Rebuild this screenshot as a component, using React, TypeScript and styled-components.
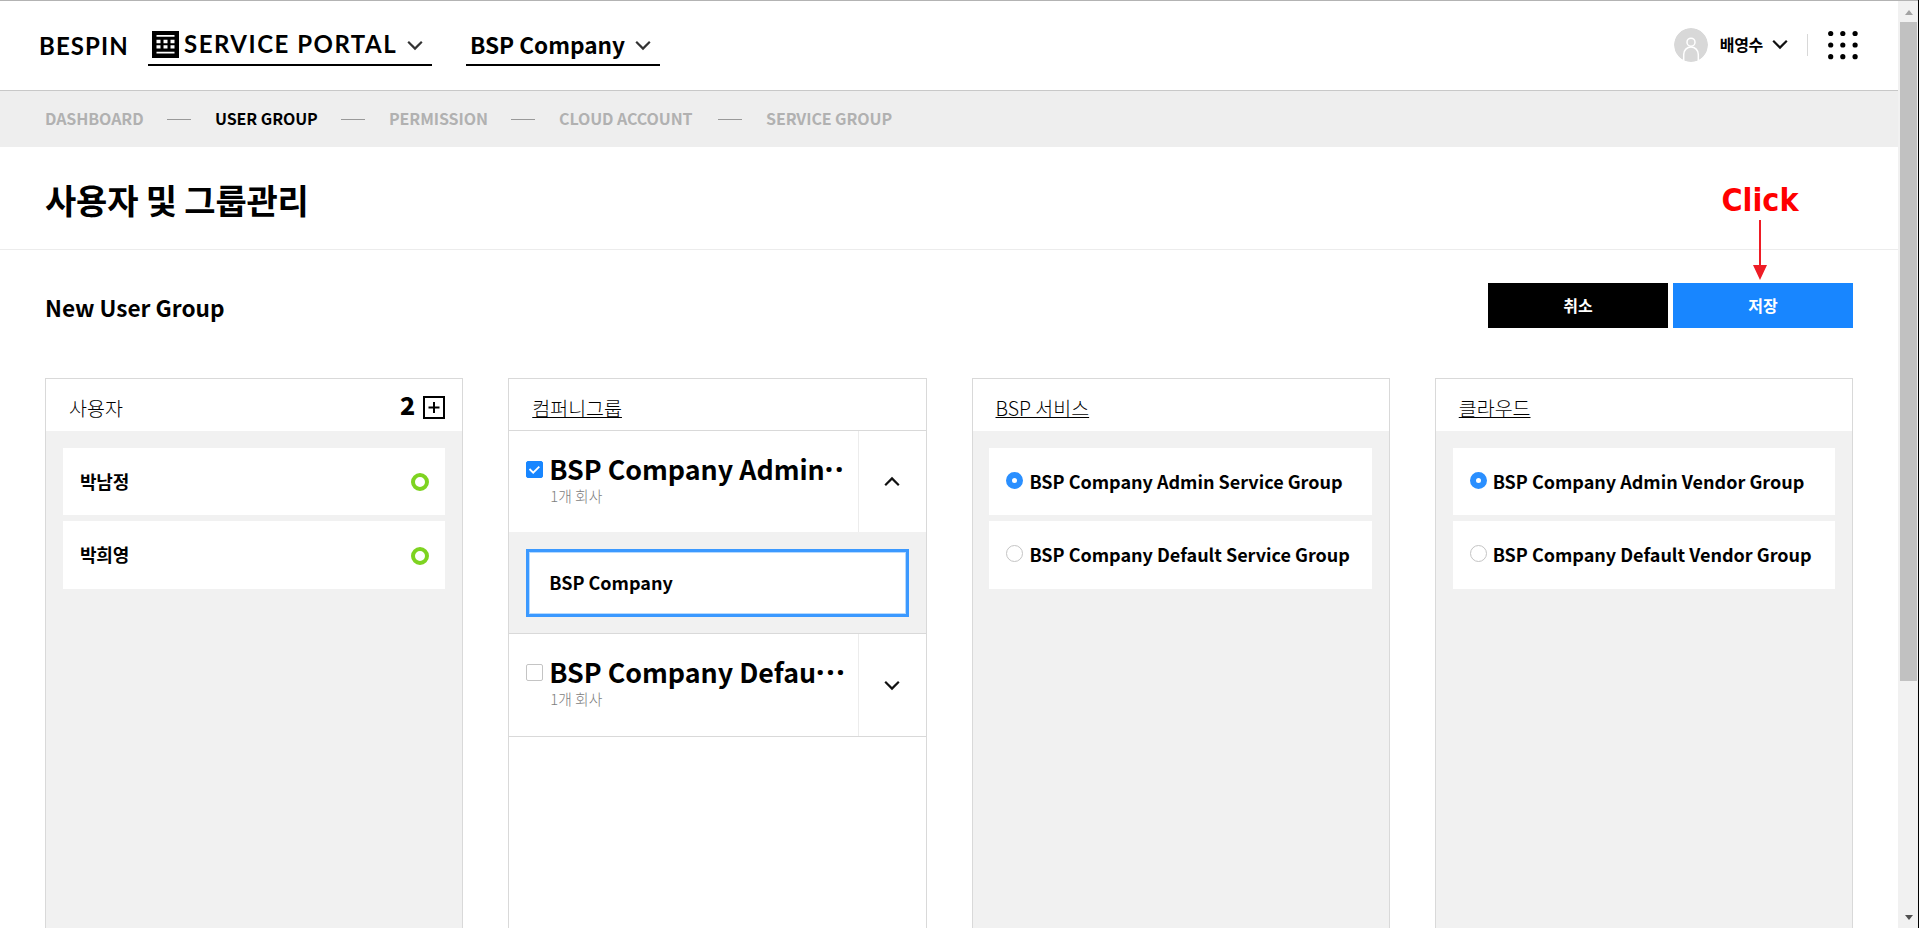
import React from "react";
import styled, { createGlobalStyle } from "styled-components";

const GlobalStyle = createGlobalStyle`
  * { box-sizing: border-box; }
  body {
    margin: 0;
    background: #fff;
    color: #000;
    font-family: "Noto Sans CJK KR", "Noto Sans", sans-serif;
    overflow: hidden;
  }
  h1, h2, p { margin: 0; }
  svg { display: block; flex: none; }
`;

const Screen = styled.div`
  display: flex;
  width: 1919px;
  height: 928px;
  overflow: hidden;
  border-right: 1px solid #000;
`;

const Page = styled.div`
  flex: 1;
  min-width: 0;
  display: flex;
  flex-direction: column;
  border-top: 1px solid #b3b3b3;
`;

const Header = styled.header`
  height: 90px;
  flex: none;
  display: flex;
  justify-content: space-between;
  border-bottom: 1px solid #c8c8c8;
  padding: 0 40px 0 39px;
`;

const HeaderSide = styled.div`
  display: flex;
`;

const Brand = styled.span`
  width: 109px;
  font: 700 24px/30px Lato, sans-serif;
  letter-spacing: 1.1px;
  padding-top: 30px;
`;

const Picker = styled.div<{ $width: number; $gap?: number }>`
  display: flex;
  justify-content: space-between;
  width: ${(p) => p.$width}px;
  height: 65px;
  margin-right: ${(p) => p.$gap ?? 0}px;
  border-bottom: 2px solid #000;
`;

const PickerName = styled.div`
  display: flex;
  padding: 30px 0 0 4px;
  gap: 5px;
`;

const PortalName = styled.span`
  font: 700 24px/30px Lato, sans-serif;
  letter-spacing: 1.5px;
  white-space: nowrap;
  margin-top: -2px;
`;

const CompanyName = styled.span`
  font-size: 22.6px;
  font-weight: 700;
  line-height: 34px;
  margin-top: -3px;
  white-space: nowrap;
`;

const PickerArrow = styled.div`
  padding: 39px 9px 0 0;
`;

const UserName = styled.span`
  font-size: 16px;
  font-weight: 700;
  line-height: 24px;
  margin: 31px 9px 0 12px;
  letter-spacing: -0.3px;
`;

const Avatar = styled.div`
  padding-top: 27px;
`;

const UserArrow = styled.div`
  padding: 38px 19px 0 0;
`;

const Divider = styled.div`
  width: 1px;
  height: 22px;
  margin: 33px 20px 0 0;
  background: #d8d8d8;
`;

const Apps = styled.div`
  padding-top: 29px;
`;

const Nav = styled.nav`
  height: 56px;
  flex: none;
  display: flex;
  align-items: center;
  gap: 24px;
  padding-left: 45px;
  background: #eee;
`;

const NavItem = styled.a<{ $active?: boolean; $width: number }>`
  width: ${(p) => p.$width}px;
  font-size: 16px;
  font-weight: 700;
  line-height: 24px;
  padding-bottom: 2px;
  white-space: nowrap;
  letter-spacing: -0.08px;
  color: ${(p) => (p.$active ? "#000" : "#b1b1b1")};
`;

const NavDash = styled.i`
  width: 24px;
  height: 1px;
  background: #999;
`;

const TitleBar = styled.div`
  height: 103px;
  flex: none;
  display: flex;
  justify-content: space-between;
  border-bottom: 1px solid #ececec;
  padding: 0 45px;
`;

const Title = styled.h1`
  font-size: 34px;
  font-weight: 700;
  line-height: 50px;
  padding-top: 28px;
  letter-spacing: -0.2px;
`;

const SubBar = styled.div`
  height: 128px;
  flex: none;
  display: flex;
  justify-content: space-between;
  padding: 33px 45px 0;
`;

const SubTitle = styled.h2`
  font-size: 22.6px;
  font-weight: 700;
  line-height: 34px;
  padding-top: 8px;
`;

const Actions = styled.div`
  position: relative;
  display: flex;
  gap: 5px;
`;

const Button = styled.button<{ $primary?: boolean }>`
  width: 180px;
  height: 45px;
  border: 0;
  padding: 0 0 1px;
  color: #fff;
  font: 700 16px/24px "Noto Sans CJK KR", sans-serif;
  background: ${(p) => (p.$primary ? "#1886ff" : "#000")};
`;

const Callout = styled.div`
  position: absolute;
  right: 42px;
  top: -103px;
  width: 102px;
  display: flex;
  flex-direction: column;
  align-items: center;
  color: #f00;
  font: 700 32px/40px "DejaVu Sans Condensed", "DejaVu Sans", sans-serif;
  font-stretch: condensed;
`;

const Columns = styled.main`
  flex: 1;
  display: grid;
  grid-template-columns: repeat(4, 1fr);
  gap: 45px;
  padding: 0 45px;
`;

const Panel = styled.section<{ $plain?: boolean }>`
  min-width: 0;
  display: flex;
  flex-direction: column;
  border: 1px solid #d9d9d9;
  border-bottom: 0;
  background: ${(p) => (p.$plain ? "#fff" : "#f1f1f1")};
`;

const PanelHead = styled.div<{ $line?: boolean }>`
  height: 52px;
  flex: none;
  display: flex;
  justify-content: space-between;
  padding: 0 17px 0 23px;
  background: #fff;
  border-bottom: ${(p) => (p.$line ? "1px solid #d9d9d9" : "0")};
`;

const PanelTitle = styled.span<{ $underline?: boolean }>`
  align-self: flex-start;
  margin-top: 15px;
  font-size: 19.5px;
  font-weight: 300;
  line-height: 28px;
  text-decoration: ${(p) => (p.$underline ? "underline" : "none")};
  text-decoration-thickness: 1px;
`;

const Count = styled.div`
  display: flex;
  gap: 8px;
  padding-top: 17px;
  font: 900 25px/16px "Noto Sans CJK KR", sans-serif;
`;

const List = styled.div`
  display: flex;
  flex-direction: column;
  gap: 6px;
  padding: 17px 17px 17px 16.9px;
`;

const Item = styled.div`
  height: 67.4px;
  display: flex;
  align-items: center;
  padding: 0 16px 2px 17px;
  background: #fff;
  font-size: 18px;
  font-weight: 700;
  white-space: nowrap;
`;

const Member = styled.span`
  flex: 1;
  letter-spacing: -0.1px;
`;

const Status = styled.i`
  width: 18px;
  height: 18px;
  margin-top: 3px;
  border: 4.5px solid #7ed321;
  border-radius: 50%;
`;

const Radio = styled.i<{ $on?: boolean }>`
  width: 17px;
  height: 17px;
  margin: -1px 6px 0 0;
  border-radius: 50%;
  border: ${(p) => (p.$on ? "6px solid #2a8fff" : "1px solid #c4c4c4")};
  background: #fff;
`;

const Group = styled.div`
  height: 103px;
  display: flex;
  border-bottom: 1px solid #d9d9d9;
`;

const OpenGroup = styled(Group)`
  height: 101px;
  border-bottom: 0;
`;

const GroupInfo = styled.div`
  flex: 1;
  min-width: 0;
  display: flex;
  gap: 6px;
  padding: 21px 0 0 17px;

  > svg {
    margin-top: 9px;
  }
`;

const GroupText = styled.div`
  width: 298px;
`;

const GroupName = styled.p`
  font-size: 26.8px;
  font-weight: 700;
  line-height: 34px;
  white-space: nowrap;
`;

const Dots = styled.span`
  font: 700 30px/20px "Noto Sans", sans-serif;
  letter-spacing: 1.7px;
`;

const GroupMeta = styled.p`
  font-size: 14.8px;
  font-weight: 300;
  line-height: 20px;
  color: #808080;
  padding-left: 1px;
`;

const Toggle = styled.div`
  width: 68px;
  display: flex;
  justify-content: center;
  align-items: center;
  border-left: 1px solid #ececec;
`;

const Nested = styled.div`
  height: 102px;
  padding: 17px 17px 0;
  background: #f1f1f1;
  border-bottom: 1px solid #d9d9d9;
`;

const Selected = styled(Item)`
  height: 68px;
  border: 3px solid #3b99ff;
  box-shadow: inset 0 0 0 1px #b5d9ff;
  padding-left: 20px;
`;

const Scrollbar = styled.aside`
  width: 20px;
  flex: none;
  display: flex;
  flex-direction: column;
  justify-content: space-between;
  background: #f1f1f1;
  border-top: 1px solid #b3b3b3;
  padding: 9px 1px 8px 2px;
`;

const Thumb = styled.div`
  height: 659px;
  margin: 7px 0 auto;
  background: #c1c1c1;
`;

const ScrollArrow = styled.i<{ $down?: boolean }>`
  align-self: center;
  border: 4.5px solid transparent;
  border-top: ${(p) => (p.$down ? "5px solid #505050" : "0")};
  border-bottom: ${(p) => (p.$down ? "0" : "5px solid #a3a3a3")};
`;

const Chevron = ({ up, color = "#111" }: { up?: boolean; color?: string }) => (
  <svg width="16" height="11" viewBox="0 0 16 11" fill="none" stroke={color} strokeWidth="2.2">
    <path d={up ? "M1.2 9.2L8 2.4L14.8 9.2" : "M1.2 1.8L8 8.6L14.8 1.8"} />
  </svg>
);

const PortalIcon = () => (
  <svg width="27" height="27" viewBox="0 0 27 27">
    <rect width="27" height="27" fill="#000" />
    <g fill="#fff">
      <path d="M4.5 4h18v1.7h-18zM4.5 20.8h18v1.7h-18z" />
      <path d="M4.5 8.8h4v3.4h-4zM11.5 8.8h4v3.4h-4zM18.5 8.8h4v3.4h-4zM4.5 14.2h4v3.4h-4zM11.5 14.2h4v3.4h-4zM18.5 14.2h4v3.4h-4z" />
    </g>
  </svg>
);

const AvatarIcon = () => (
  <svg width="34" height="34" viewBox="0 0 34 34">
    <defs>
      <clipPath id="avatar"><circle cx="17" cy="17" r="17" /></clipPath>
    </defs>
    <g clipPath="url(#avatar)" fill="none" stroke="#fff" strokeWidth="1.5">
      <circle cx="17" cy="17" r="17" fill="#d8d8d8" stroke="none" />
      <circle cx="17" cy="14.2" r="4" />
      <path d="M9.7 34V26.5a7.3 7.6 0 0 1 14.6 0V34" />
    </g>
  </svg>
);

const AppsIcon = () => (
  <svg width="30" height="30" viewBox="0 0 30 30">
    {[3.5, 15, 26.7].map((y) =>
      [2.7, 14.8, 27.1].map((x) => <circle key={`${x}-${y}`} cx={x} cy={y} r="2.6" />)
    )}
  </svg>
);

const PlusBox = () => (
  <svg width="22" height="23" viewBox="0 0 22 23" fill="none" stroke="#000" strokeWidth="2">
    <rect x="1" y="1" width="20" height="21" />
    <path d="M5.5 11.5h11M11 6v11" />
  </svg>
);

const CheckBox = ({ on }: { on?: boolean }) => (
  <svg width="17" height="17" viewBox="0 0 17 17" fill="none">
    <rect x="0.5" y="0.5" width="16" height="16" rx="1.5" fill={on ? "#1886ff" : "#fff"} stroke={on ? "#1886ff" : "#c4c4c4"} />
    {on && <path d="M3.5 8l3.7 3.7L13.3 5.6" stroke="#fff" strokeWidth="1.8" />}
  </svg>
);

const Arrow = () => (
  <svg width="16" height="61" viewBox="0 0 16 61" fill="#ee1c25">
    <path d="M7 0h2v45h6l-7 15l-7-15h6z" />
  </svg>
);

const navItems = [
  { label: "DASHBOARD", width: 98 },
  { label: "USER GROUP", width: 102 },
  { label: "PERMISSION", width: 98 },
  { label: "CLOUD ACCOUNT", width: 135 },
  { label: "SERVICE GROUP", width: 127 },
];

const choices = [
  { title: "BSP 서비스", options: ["BSP Company Admin Service Group", "BSP Company Default Service Group"] },
  { title: "클라우드", options: ["BSP Company Admin Vendor Group", "BSP Company Default Vendor Group"] },
];

export default function App() {
  return (
    <>
      <GlobalStyle />
      <Screen>
        <Page>
          <Header>
            <HeaderSide>
              <Brand>BESPIN</Brand>
              <Picker $width={284} $gap={34}>
                <PickerName>
                  <PortalIcon />
                  <PortalName>SERVICE PORTAL</PortalName>
                </PickerName>
                <PickerArrow><Chevron color="#333" /></PickerArrow>
              </Picker>
              <Picker $width={194}>
                <PickerName><CompanyName>BSP Company</CompanyName></PickerName>
                <PickerArrow><Chevron color="#333" /></PickerArrow>
              </Picker>
            </HeaderSide>
            <HeaderSide>
              <Avatar><AvatarIcon /></Avatar>
              <UserName>배영수</UserName>
              <UserArrow><Chevron /></UserArrow>
              <Divider />
              <Apps><AppsIcon /></Apps>
            </HeaderSide>
          </Header>
          <Nav>
            {navItems.map((item, i) => (
              <React.Fragment key={item.label}>
                {i > 0 && <NavDash />}
                <NavItem $width={item.width} $active={i === 1}>{item.label}</NavItem>
              </React.Fragment>
            ))}
          </Nav>
          <TitleBar><Title>사용자 및 그룹관리</Title></TitleBar>
          <SubBar>
            <SubTitle>New User Group</SubTitle>
            <Actions>
              <Button>취소</Button>
              <Button $primary>저장</Button>
              <Callout>Click<Arrow /></Callout>
            </Actions>
          </SubBar>
          <Columns>
            <Panel>
              <PanelHead>
                <PanelTitle>사용자</PanelTitle>
                <Count>2<PlusBox /></Count>
              </PanelHead>
              <List>
                {["박남정", "박희영"].map((name) => (
                  <Item key={name}><Member>{name}</Member><Status /></Item>
                ))}
              </List>
            </Panel>
            <Panel $plain>
              <PanelHead $line><PanelTitle $underline>컴퍼니그룹</PanelTitle></PanelHead>
              <OpenGroup>
                <GroupInfo>
                  <CheckBox on />
                  <GroupText>
                    <GroupName>BSP Company Admin<Dots>··</Dots></GroupName>
                    <GroupMeta>1개 회사</GroupMeta>
                  </GroupText>
                </GroupInfo>
                <Toggle><Chevron up /></Toggle>
              </OpenGroup>
              <Nested><Selected>BSP Company</Selected></Nested>
              <Group>
                <GroupInfo>
                  <CheckBox />
                  <GroupText>
                    <GroupName>BSP Company Defau<Dots>···</Dots></GroupName>
                    <GroupMeta>1개 회사</GroupMeta>
                  </GroupText>
                </GroupInfo>
                <Toggle><Chevron /></Toggle>
              </Group>
            </Panel>
            {choices.map((panel) => (
              <Panel key={panel.title}>
                <PanelHead><PanelTitle $underline>{panel.title}</PanelTitle></PanelHead>
                <List>
                  {panel.options.map((option, i) => (
                    <Item key={option}><Radio $on={i === 0} />{option}</Item>
                  ))}
                </List>
              </Panel>
            ))}
          </Columns>
        </Page>
        <Scrollbar>
          <ScrollArrow />
          <Thumb />
          <ScrollArrow $down />
        </Scrollbar>
      </Screen>
    </>
  );
}
